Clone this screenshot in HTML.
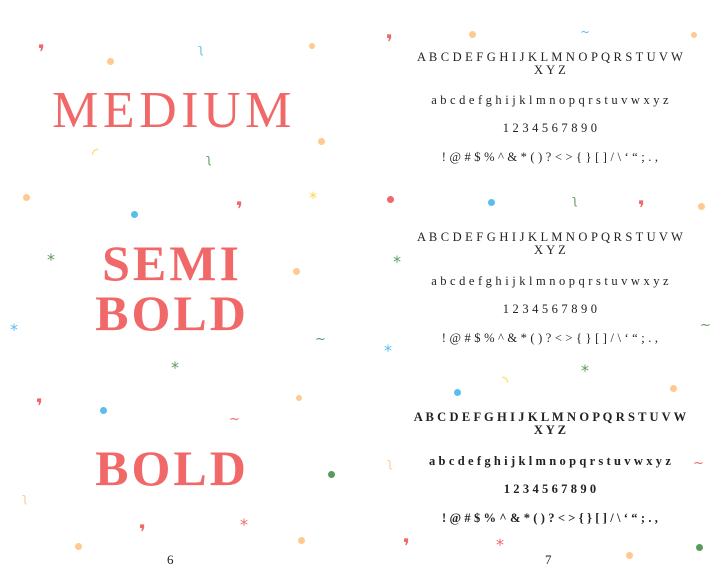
<!DOCTYPE html>
<html><head><meta charset="utf-8"><style>
body{margin:0;width:720px;height:576px;background:#fff;position:relative;overflow:hidden;font-family:"Liberation Serif",serif}
.big{position:absolute;left:0;width:344px;text-align:center;color:#f06868;font-size:52px;line-height:50px;letter-spacing:4.5px}
.r{position:absolute;left:380px;width:340px;text-align:center;color:#222;font-size:12.5px;letter-spacing:0.2px;line-height:13px;white-space:nowrap}
.b{font-weight:bold;letter-spacing:0.1px}
.d{position:absolute;border-radius:50%;width:7px;height:7px}
.g{position:absolute;font-size:16px;line-height:16px;font-family:"DejaVu Sans",sans-serif}
.pn{position:absolute;top:552px;font-size:13px;color:#222}
</style></head><body>
<div class="big" style="top:86px;left:2px">MEDIUM</div>
<div class="big b" style="top:238px;letter-spacing:3px;font-size:50px">SEMI<br>BOLD</div>
<div class="big b" style="top:443px;letter-spacing:3px;font-size:50px">BOLD</div>

<div class="r" style="top:51px">A B C D E F G H I J K L M N O P Q R S T U V W<br>X Y Z</div>
<div class="r" style="top:94px">a b c d e f g h i j k l m n o p q r s t u v w x y z</div>
<div class="r" style="top:122px">1 2 3 4 5 6 7 8 9 0</div>
<div class="r" style="top:151px">! @ # $ % ^ &amp; * ( ) ? &lt; &gt; { } [ ] / \ ‘ “ ; . ,</div>

<div class="r" style="top:231px">A B C D E F G H I J K L M N O P Q R S T U V W<br>X Y Z</div>
<div class="r" style="top:275px">a b c d e f g h i j k l m n o p q r s t u v w x y z</div>
<div class="r" style="top:303px">1 2 3 4 5 6 7 8 9 0</div>
<div class="r" style="top:332px">! @ # $ % ^ &amp; * ( ) ? &lt; &gt; { } [ ] / \ ‘ “ ; . ,</div>

<div class="r b" style="top:411px">A B C D E F G H I J K L M N O P Q R S T U V W<br>X Y Z</div>
<div class="r b" style="top:455px">a b c d e f g h i j k l m n o p q r s t u v w x y z</div>
<div class="r b" style="top:483px">1 2 3 4 5 6 7 8 9 0</div>
<div class="r b" style="top:512px">! @ # $ % ^ &amp; * ( ) ? &lt; &gt; { } [ ] / \ ‘ “ ; . ,</div>

<div class="pn" style="left:167px">6</div>
<div class="pn" style="left:545px">7</div>

<div class="d" style="left:107px;top:58px;background:#ffc98f"></div>
<div class="d" style="left:309px;top:43px;width:6px;height:6px;background:#ffc98f"></div>
<div class="d" style="left:318px;top:138px;background:#ffc98f"></div>
<div class="d" style="left:23px;top:194px;background:#ffc98f"></div>
<div class="d" style="left:131px;top:211px;background:#5bbcef"></div>
<div class="d" style="left:293px;top:268px;background:#ffc98f"></div>
<div class="d" style="left:296px;top:395px;width:6px;height:6px;background:#ffc98f"></div>
<div class="d" style="left:100px;top:407px;background:#5bbcef"></div>
<div class="d" style="left:328px;top:471px;background:#5a9a5a"></div>
<div class="d" style="left:75px;top:543px;background:#ffc98f"></div>
<div class="d" style="left:298px;top:537px;background:#ffc98f"></div>
<div class="d" style="left:469px;top:31px;background:#ffc98f"></div>
<div class="d" style="left:691px;top:32px;width:6px;height:6px;background:#ffc98f"></div>
<div class="d" style="left:387px;top:196px;background:#f06868"></div>
<div class="d" style="left:488px;top:199px;background:#5bbcef"></div>
<div class="d" style="left:698px;top:203px;background:#ffc98f"></div>
<div class="d" style="left:454px;top:389px;background:#5bbcef"></div>
<div class="d" style="left:670px;top:385px;background:#ffc98f"></div>
<div class="d" style="left:626px;top:552px;background:#ffc98f"></div>
<div class="d" style="left:696px;top:544px;background:#5a9a5a"></div>

<div class="g" style="left:38px;top:44px;color:#f06868;font-weight:bold;font-size:20px">❜</div>
<div class="g" style="left:386px;top:34px;color:#f06868;font-weight:bold;font-size:20px">❜</div>
<div class="g" style="left:236px;top:201px;color:#f06868;font-weight:bold;font-size:20px">❜</div>
<div class="g" style="left:638px;top:200px;color:#f06868;font-weight:bold;font-size:20px">❜</div>
<div class="g" style="left:36px;top:398px;color:#f06868;font-weight:bold;font-size:20px">❜</div>
<div class="g" style="left:139px;top:524px;color:#f06868;font-weight:bold;font-size:20px">❜</div>
<div class="g" style="left:403px;top:538px;color:#f06868;font-weight:bold;font-size:20px">❜</div>
<div class="g" style="left:92px;top:146px;color:#ffd54f;font-weight:bold">◜</div>
<div class="g" style="left:502px;top:374px;color:#ffd54f;font-weight:bold">◝</div>
<div class="g" style="left:198px;top:41px;color:#5bbcef;font-size:12px">ʅ</div>
<div class="g" style="left:580px;top:24px;color:#5bbcef;font-size:12px">~</div>
<div class="g" style="left:206px;top:151px;color:#5a9a5a;font-size:12px">ʅ</div>
<div class="g" style="left:572px;top:192px;color:#5a9a5a;font-size:12px">ʅ</div>
<div class="g" style="left:309px;top:190px;color:#ffd54f">*</div>
<div class="g" style="left:47px;top:252px;color:#5a9a5a">*</div>
<div class="g" style="left:393px;top:254px;color:#5a9a5a">*</div>
<div class="g" style="left:10px;top:322px;color:#5bbcef">*</div>
<div class="g" style="left:384px;top:343px;color:#5bbcef">*</div>
<div class="g" style="left:171px;top:360px;color:#5a9a5a">*</div>
<div class="g" style="left:581px;top:363px;color:#5a9a5a">*</div>
<div class="g" style="left:240px;top:517px;color:#f06868">*</div>
<div class="g" style="left:496px;top:537px;color:#f06868">*</div>
<div class="g" style="left:315px;top:332px;color:#5a9a5a;font-size:13px">~</div>
<div class="g" style="left:700px;top:318px;color:#5a9a5a;font-size:13px">~</div>
<div class="g" style="left:229px;top:412px;color:#f06868;font-size:13px">~</div>
<div class="g" style="left:693px;top:456px;color:#f06868;font-size:13px">~</div>
<div class="g" style="left:22px;top:490px;color:#ffc98f;font-size:12px">ʅ</div>
<div class="g" style="left:387px;top:455px;color:#ffc98f;font-size:12px">ʅ</div>
</body></html>
